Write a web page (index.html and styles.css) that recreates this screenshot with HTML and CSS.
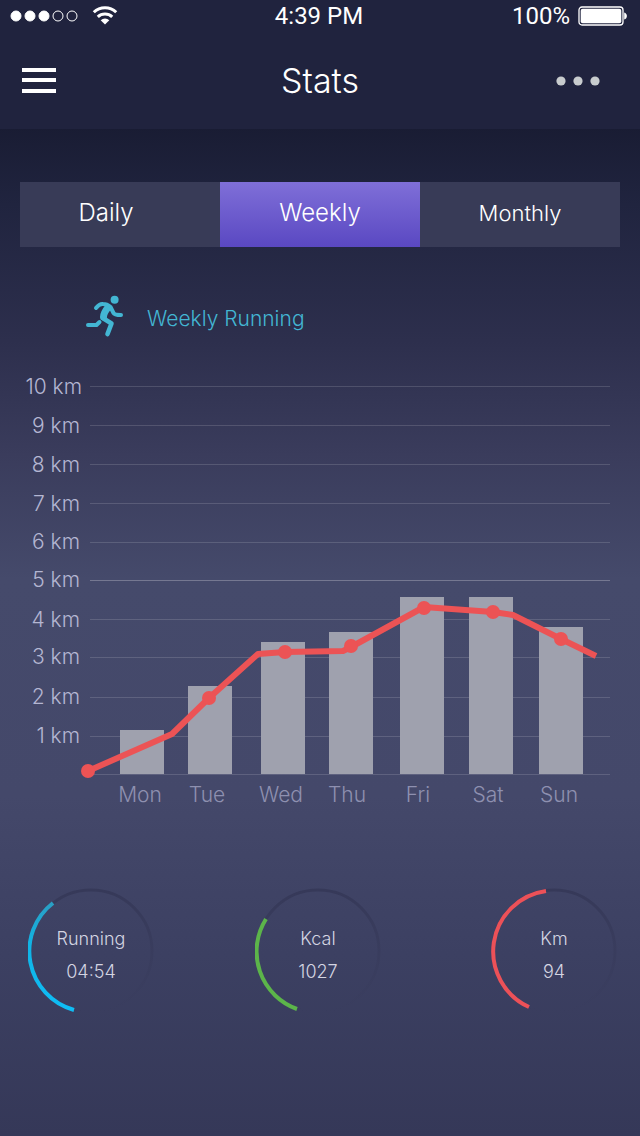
FILE: index.html
```html
<!DOCTYPE html>
<html lang="en">
<head>
    <meta charset="UTF-8">
    <meta name="viewport" content="width=device-width, initial-scale=1">
    <title>Stats</title>
    <link rel="stylesheet" href="styles.css">
</head>
<body>
    <header class="header">
        <div class="status-bar">
            <div class="status-left">
                <svg width="68" height="12" viewBox="0 0 68 12">
                    <g fill="#fff" stroke="#fff">
                        <circle cx="6" cy="6" r="5"/>
                        <circle cx="20" cy="6" r="5"/>
                        <circle cx="34" cy="6" r="5"/>
                        <circle cx="48" cy="6" r="5" fill="none"/>
                        <circle cx="62" cy="6" r="5" fill="none"/>
                    </g>
                </svg>
                <svg width="26" height="20" viewBox="0 0 26 20">
                    <g fill="none" stroke="#fff" stroke-width="3">
                        <path d="M1.8 6.2a16 16 0 0 1 22.4 0"/>
                        <path d="M5.8 10.8a10.4 10.4 0 0 1 14.4 0"/>
                    </g>
                    <path d="M8.7 14.2a6.3 6.3 0 0 1 8.6 0L13 18.6z" fill="#fff"/>
                </svg>
            </div>
            <span>4:39 PM</span>
            <div class="status-right">
                <span>100%</span>
                <svg width="50" height="20" viewBox="0 0 50 20">
                    <rect x="1" y="1" width="44" height="18" rx="3" fill="none" stroke="#fff" stroke-width="1.3"/>
                    <rect x="2.7" y="2.7" width="40.6" height="14.6" rx="2" fill="#fff"/>
                    <path d="M46.2 6.5c3.6 1 3.6 6 0 7z" fill="#fff"/>
                </svg>
            </div>
        </div>
        <nav class="nav">
            <button class="icon-btn" type="button" aria-label="Menu">
                <svg width="34" height="26" viewBox="0 0 34 26" fill="#fff">
                    <rect y="0" width="34" height="4"/>
                    <rect y="10" width="34" height="4"/>
                    <rect y="21" width="34" height="4"/>
                </svg>
            </button>
            <h1>Stats</h1>
            <button class="icon-btn more" type="button" aria-label="More">
                <svg width="44" height="10" viewBox="0 0 44 10" fill="#c8ccce">
                    <circle cx="5" cy="5" r="4.6"/>
                    <circle cx="22" cy="5" r="4.6"/>
                    <circle cx="39" cy="5" r="4.6"/>
                </svg>
            </button>
        </nav>
    </header>

    <main class="content">
        <div class="tabs">
            <button class="tab tab-daily" type="button">Daily</button>
            <button class="tab active" type="button">Weekly</button>
            <button class="tab tab-monthly" type="button">Monthly</button>
        </div>

        <div class="legend">
            <svg width="40" height="42" viewBox="0 0 40 42" fill="none" stroke="#43b6d3" stroke-linecap="round" stroke-linejoin="round">
                <circle cx="29.6" cy="4.8" r="4" fill="#43b6d3" stroke="none"/>
                <path d="M11 13Q14.500 8.500 18 9Q22 9 25.500 12L28.500 18Q29.500 20 36 20" stroke-width="4"/>
                <path d="M23 12.500Q18.500 18 18.500 22" stroke-width="7"/>
                <path d="M18.500 23.500L26.500 28.500L22.500 39" stroke-width="4.600"/>
                <path d="M14.500 27L11.500 30H3" stroke-width="4"/>
            </svg>
            <h2>Weekly Running</h2>
        </div>

        <svg class="chart" viewBox="0 0 600 440" role="img" aria-label="Weekly running">
            <g class="grid-lines">
                <path d="M70 16H590M70 55H590M70 94H590M70 133H590M70 172H590M70 249H590M70 287H590M70 327H590M70 366H590M70 404H590"/>
                <path class="mid" d="M70 210H590"/>
            </g>
            <g class="bars">
                <rect x="100" y="360" width="44" height="44"/>
                <rect x="168" y="316" width="44" height="88"/>
                <rect x="241" y="272" width="44" height="132"/>
                <rect x="309" y="262" width="44" height="142"/>
                <rect x="380" y="227" width="44" height="177"/>
                <rect x="449" y="227" width="44" height="177"/>
                <rect x="519" y="257" width="44" height="147"/>
            </g>
            <polyline class="line" points="68,401 152,364 189,328 238,284 265,282 323,281 331,277 404,237 473,242 493,245 541,269 576,286"/>
            <g class="dots">
                <circle cx="68" cy="401" r="7"/>
                <circle cx="189" cy="328" r="7"/>
                <circle cx="265" cy="282" r="7"/>
                <circle cx="331" cy="276" r="7"/>
                <circle cx="404" cy="238" r="7"/>
                <circle cx="473" cy="242" r="7"/>
                <circle cx="541" cy="269" r="7"/>
            </g>
            <g class="y-labels">
                <text x="62" y="24">10 km</text>
                <text x="60" y="63">9 km</text>
                <text x="60" y="102">8 km</text>
                <text x="60" y="141">7 km</text>
                <text x="60" y="179">6 km</text>
                <text x="60" y="217">5 km</text>
                <text x="60" y="257">4 km</text>
                <text x="60" y="294">3 km</text>
                <text x="60" y="334">2 km</text>
                <text x="60" y="373">1 km</text>
            </g>
            <g class="x-labels">
                <text x="120" y="432">Mon</text>
                <text x="187" y="432">Tue</text>
                <text x="261" y="432">Wed</text>
                <text x="327" y="432">Thu</text>
                <text x="398" y="432">Fri</text>
                <text x="468" y="432">Sat</text>
                <text x="539" y="432">Sun</text>
            </g>
        </svg>

        <div class="rings">
            <div class="ring">
                <svg width="126" height="126" viewBox="0 0 126 126" fill="none">
                    <defs>
                        <linearGradient id="track" x1="0" y1="0" x2="0" y2="1">
                            <stop offset="0" stop-color="#363959"/>
                            <stop offset="1" stop-color="#363959" stop-opacity="0"/>
                        </linearGradient>
                        <linearGradient id="blue" x1="0" y1="0" x2="0" y2="1">
                            <stop offset="0" stop-color="#2a9fc4"/>
                            <stop offset=".4" stop-color="#10b4e6"/>
                            <stop offset="1" stop-color="#0fbdf5"/>
                        </linearGradient>
                    </defs>
                    <circle cx="63" cy="63" r="61" stroke="url(#track)" stroke-width="3"/>
                    <path d="M25 15A61 61 0 0 0 46 122" stroke="url(#blue)" stroke-width="4"/>
                </svg>
                <div class="ring-text">
                    <span>Running</span>
                    <span>04:54</span>
                </div>
            </div>
            <div class="ring">
                <svg width="126" height="126" viewBox="0 0 126 126" fill="none">
                    <circle cx="63" cy="63" r="61" stroke="url(#track)" stroke-width="3"/>
                    <path d="M11 31A61 61 0 0 0 42 121" stroke="#5cb54a" stroke-width="4"/>
                </svg>
                <div class="ring-text">
                    <span>Kcal</span>
                    <span>1027</span>
                </div>
            </div>
            <div class="ring">
                <svg width="126" height="126" viewBox="0 0 126 126" fill="none">
                    <circle cx="63" cy="63" r="61" stroke="url(#track)" stroke-width="3"/>
                    <path d="M55 3A61 61 0 0 0 38 119" stroke="#ec5158" stroke-width="4"/>
                </svg>
                <div class="ring-text">
                    <span>Km</span>
                    <span>94</span>
                </div>
            </div>
        </div>
    </main>
</body>
</html>
```
FILE: styles.css
```css
* {
    box-sizing: border-box;
}

body {
    margin: 0;
    min-height: 100vh;
    font-family: Inter, "Liberation Sans", sans-serif;
    font-weight: 300;
    color: #fff;
    background: linear-gradient(#191c33 11%, #20243f 18%, #2d2f4d 30%, #3a3c5c 40%, #454a6b 51%, #44486a 70%, #3c4062 84%, #353858);
}

button {
    font: inherit;
    color: inherit;
    background: none;
    border: none;
    padding: 0;
    cursor: pointer;
}

svg {
    display: block;
}

h1, h2 {
    margin: 0;
    font-weight: 300;
}

.header {
    background-color: #20233e;
}

.status-bar {
    display: grid;
    grid-template-columns: 1fr auto 1fr;
    align-items: center;
    height: 32px;
    padding: 0 12px 0 10px;
    font-family: Roboto, sans-serif;
    font-size: 24px;
    font-weight: 400;
}

.status-left, .status-right {
    display: flex;
    align-items: center;
    gap: 8px;
}

.status-left {
    gap: 14px;
}

.status-right {
    justify-content: flex-end;
}

.nav {
    display: grid;
    grid-template-columns: 1fr auto 1fr;
    align-items: center;
    height: 97px;
    padding: 0 22px;
}

.nav h1 {
    font-size: 34px;
    line-height: 40px;
}

.icon-btn {
    justify-self: start;
}

.icon-btn.more {
    justify-self: end;
    padding-right: 18px;
}

.content {
    padding: 53px 20px 40px;
}

.tabs {
    display: grid;
    grid-template-columns: repeat(3, 1fr);
}

.tab {
    height: 65px;
    padding-bottom: 4px;
    background-color: #383b57;
    font-size: 24px;
}

.tab-daily {
    padding-right: 28px;
}

.tab-monthly {
    font-size: 22px;
}

.tab.active {
    background: linear-gradient(#7f6fd8, #5a48c2);
}

.legend {
    display: flex;
    align-items: center;
    gap: 22px;
    margin-top: 48px;
    padding-left: 65px;
    color: #43b6d3;
}

.legend h2 {
    padding-top: 4px;
    font-size: 21px;
}

.chart {
    width: 100%;
    margin-top: 33px;
    overflow: visible;
}

.grid-lines path {
    stroke: #fff;
    stroke-opacity: 0.14;
    shape-rendering: crispEdges;
}

.grid-lines .mid {
    stroke-opacity: 0.26;
}

.bars {
    fill: #9fa1ae;
}

.line {
    fill: none;
    stroke: #ec5355;
    stroke-width: 6;
    stroke-linejoin: round;
}

.dots {
    fill: #ec5355;
}

.y-labels {
    fill: #b4b6d2;
    font-size: 21px;
    text-anchor: end;
}

.x-labels {
    fill: #8e90b0;
    font-size: 21px;
    text-anchor: middle;
}

.rings {
    display: grid;
    grid-template-columns: 227fr 236fr 126fr;
    margin-top: 78px;
    padding: 0 3px 0 8px;
}

.ring {
    display: grid;
    grid-template-columns: 126px;
}

.ring svg, .ring-text {
    grid-area: 1 / 1;
}

.ring-text {
    display: flex;
    flex-direction: column;
    justify-content: center;
    padding-top: 8px;
    text-align: center;
    font-size: 18px;
    line-height: 33px;
    color: #d4d5e2;
}
```
